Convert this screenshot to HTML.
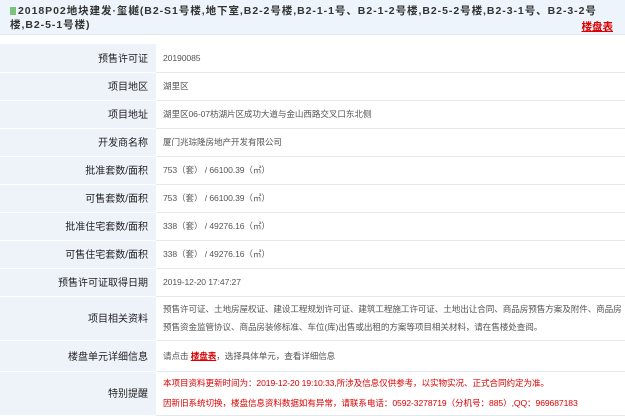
<!DOCTYPE html>
<html><head><meta charset="utf-8"><style>
*{margin:0;padding:0;box-sizing:border-box}
body{width:625px;height:412px;overflow:hidden;background:#fff;font-family:"Liberation Sans","Noto Sans CJK SC",sans-serif;}
.hd{position:absolute;left:0;top:0;width:625px;height:35px;background:#eef4fb;border-bottom:1px solid #dfe6ee;}
.t{position:absolute;left:10px;top:4px;font-size:10.5px;font-weight:bold;color:#333;letter-spacing:0.95px;line-height:14px;width:600px}
.ic{display:inline-block;width:6px;height:8px;background:#7cc47a;margin-right:2px;vertical-align:-1px}
.lp{position:absolute;right:12px;top:19px;font-size:10.5px;font-weight:bold;color:#d00;text-decoration:underline}
table{position:absolute;left:0;top:44px;width:625px;border-collapse:collapse}
td{border-bottom:1px solid #e3e8ee;font-size:8.6px;color:#555;padding:0 1px 0 7px;line-height:16px;vertical-align:middle;letter-spacing:-0.1px}
td.l{width:156px;background:#eef3fa;text-align:right;font-size:10px;color:#222;padding:4px 8px 0 0;border-bottom:1px solid #fff;letter-spacing:0}
.r{color:#d00}
.u{color:#d00;font-weight:bold;text-decoration:underline}
</style></head><body>
<div class="hd"><div class="t"><span class="ic"></span>2018P02地块建发·玺樾(B2-S1号楼,地下室,B2-2号楼,B2-1-1号、B2-1-2号楼,B2-5-2号楼,B2-3-1号、B2-3-2号楼,B2-5-1号楼)</div><div class="lp">楼盘表</div></div>
<table>
<tr style="height:28px"><td class="l">预售许可证</td><td>20190085</td></tr>
<tr style="height:28px"><td class="l">项目地区</td><td>湖里区</td></tr>
<tr style="height:28px"><td class="l">项目地址</td><td>湖里区06-07枋湖片区成功大道与金山西路交叉口东北侧</td></tr>
<tr style="height:28px"><td class="l">开发商名称</td><td>厦门兆琮隆房地产开发有限公司</td></tr>
<tr style="height:28px"><td class="l">批准套数/面积</td><td>753（套） / 66100.39（㎡）</td></tr>
<tr style="height:28px"><td class="l">可售套数/面积</td><td>753（套） / 66100.39（㎡）</td></tr>
<tr style="height:28px"><td class="l">批准住宅套数/面积</td><td>338（套） / 49276.16（㎡）</td></tr>
<tr style="height:28px"><td class="l">可售住宅套数/面积</td><td>338（套） / 49276.16（㎡）</td></tr>
<tr style="height:28px"><td class="l">预售许可证取得日期</td><td>2019-12-20 17:47:27</td></tr>
<tr style="height:44px"><td class="l">项目相关资料</td><td style="line-height:18px">预售许可证、土地房屋权证、建设工程规划许可证、建筑工程施工许可证、土地出让合同、商品房预售方案及附件、商品房预售资金监管协议、商品房装修标准、车位(库)出售或出租的方案等项目相关材料，请在售楼处查阅。</td></tr>
<tr style="height:31px"><td class="l">楼盘单元详细信息</td><td>请点击 <span class="u">楼盘表</span>，选择具体单元，查看详细信息</td></tr>
<tr style="height:44px"><td class="l">特别提醒</td><td class="r" style="line-height:20px">本项目资料更新时间为：2019-12-20 19:10:33,所涉及信息仅供参考，以实物实况、正式合同约定为准。<br>因新旧系统切换，楼盘信息资料数据如有异常，请联系电话：0592-3278719（分机号：885）,QQ：969687183</td></tr>
</table>
</body></html>
